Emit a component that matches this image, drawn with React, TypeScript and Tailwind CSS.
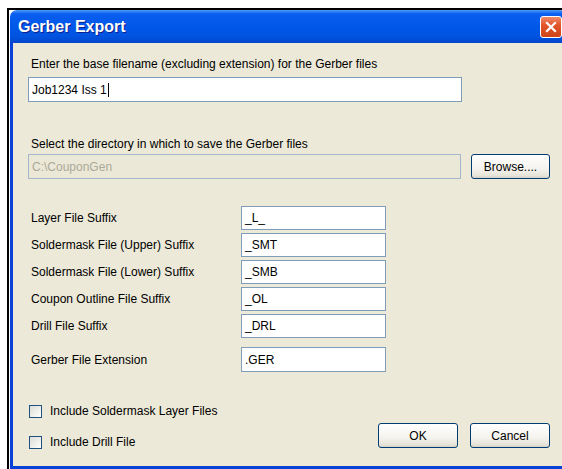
import React from "react";

const suffixRows = [
  { label: "Layer File Suffix", value: "_L_" },
  { label: "Soldermask File (Upper) Suffix", value: "_SMT" },
  { label: "Soldermask File (Lower) Suffix", value: "_SMB" },
  { label: "Coupon Outline File Suffix", value: "_OL" },
  { label: "Drill File Suffix", value: "_DRL" },
];

const XpButton = ({ children, className = "" }: { children: React.ReactNode; className?: string }) => (
  <button
    className={`h-[25px] rounded-[3px] border border-[#003C74] bg-[linear-gradient(180deg,#ffffff_0%,#f4f3ee_60%,#e6e3d8_90%,#d6d0c5_100%)] text-[12px] text-black ${className}`}
  >
    {children}
  </button>
);

const XpCheckbox = ({ label }: { label: string }) => (
  <label className="flex h-[16px] items-center gap-[8px]">
    <span className="h-[13px] w-[13px] border border-[#1C5180] bg-[linear-gradient(135deg,#dcdcd7_0%,#f4f4f1_70%,#ffffff_100%)]" />
    <span>{label}</span>
  </label>
);

const App = () => {
  return (
    <div className="h-[469px] w-[562px] overflow-hidden bg-white pl-[7px] pt-[8px] font-['Liberation_Sans',Arial,sans-serif]">
      <div className="h-full border-l-2 border-t-2 border-black pl-px pt-0">
        <div className="w-[557px] overflow-hidden rounded-t-[7px]">
          {/* title bar */}
          <div className="flex h-[33px] items-center justify-between bg-[linear-gradient(180deg,#4d9bf7_0%,#0a5ef0_12%,#0058e8_50%,#0053e0_80%,#0046cc_100%)] pl-[8px] pr-[5px]">
            <span className="text-[16px] font-bold text-white [text-shadow:1px_1px_#0a1f8f]">
              Gerber Export
            </span>
            <div className="flex h-[22px] w-[22px] items-center justify-center rounded-[3px] border border-white bg-[linear-gradient(180deg,#f08a6a_0%,#e2562c_40%,#cf4418_100%)]">
              <svg width="12" height="12" viewBox="0 0 12 12">
                <path d="M2 2 L10 10 M10 2 L2 10" stroke="white" strokeWidth="2.2" strokeLinecap="square" />
              </svg>
            </div>
          </div>

          {/* dialog body */}
          <div className="h-[426px] border-x-[3px] border-b-[3px] border-[#0842d6] bg-[#ECE9D8] pl-[15px] pt-[14px] text-[12px] text-black">
            <div className="pl-[3px] leading-[14px]">
              Enter the base filename (excluding extension) for the Gerber files
            </div>
            <div className="mt-[6px] flex h-[25px] w-[434px] items-center border border-[#7F9DB9] bg-white pl-[3px]">
              <span>Job1234 Iss 1</span>
              <span className="ml-px h-[14px] w-px bg-black" />
            </div>

            <div className="mt-[35px] pl-[3px] leading-[14px]">
              Select the directory in which to save the Gerber files
            </div>
            <div className="mt-[3px] flex items-center gap-[10px]">
              <div className="flex h-[25px] w-[433px] items-center border border-[#A5B7CA] bg-[#EBE8D7] pl-[3px] text-[#ACA899]">
                C:\CouponGen
              </div>
              <XpButton className="w-[79px]">Browse....</XpButton>
            </div>

            <div className="mt-[27px] flex flex-col gap-[3px]">
              {suffixRows.map((row) => (
                <div key={row.label} className="flex h-[24px] items-center">
                  <span className="w-[213px] pl-[3px]">{row.label}</span>
                  <div className="flex h-[24px] w-[145px] items-center border border-[#7F9DB9] bg-white pl-[3px]">
                    {row.value}
                  </div>
                </div>
              ))}
            </div>
            <div className="mt-[9px] flex h-[25px] items-center">
              <span className="w-[213px] pl-[3px]">Gerber File Extension</span>
              <div className="flex h-[25px] w-[145px] items-center border border-[#7F9DB9] bg-white pl-[3px]">
                .GER
              </div>
            </div>

            <div className="mt-[31px] flex w-[522px] items-start justify-between">
              <div className="flex flex-col gap-[15px] pl-px">
                <XpCheckbox label="Include Soldermask Layer Files" />
                <XpCheckbox label="Include Drill File" />
              </div>
              <div className="mt-[20px] flex gap-[12px]">
                <XpButton className="w-[80px]">OK</XpButton>
                <XpButton className="w-[80px]">Cancel</XpButton>
              </div>
            </div>
          </div>
        </div>
      </div>
    </div>
  );
};

export default App;
